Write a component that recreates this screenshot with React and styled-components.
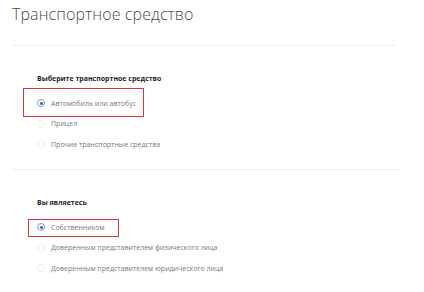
import React from 'react'
import styled, { createGlobalStyle } from 'styled-components'

const GlobalStyle = createGlobalStyle`
  html, body {
    margin: 0;
    padding: 0;
    background: #ffffff;
  }
  body {
    font-family: "Open Sans", "DejaVu Sans", sans-serif;
  }
`

const Page = styled.div`
  width: 424px;
  padding: 0 28px 0 12px;
  box-sizing: border-box;
`

const TitleBar = styled.div`
  height: 45px;
  border-bottom: 1px solid #eeeeee;
  width: 384px;
  box-sizing: content-box;
`

const Title = styled.h1`
  margin: 0;
  padding-top: 0;
  font-size: 16px;
  line-height: 29px;
  font-weight: 300;
  color: #4a4a4a;
  letter-spacing: 0.1px;
`

const Section = styled.section`
  padding: 26.5px 0 14.5px 25px;
  width: 363px;
  border-bottom: ${p => (p.$last ? 'none' : '1px solid #eeeeee')};
`

const Heading = styled.h2`
  margin: 0 0 8.5px;
  font-size: 7px;
  line-height: 12px;
  font-weight: 700;
  color: #1f1f1f;
`

const Options = styled.div`
  display: flex;
  flex-direction: column;
`

const Row = styled.label`
  position: relative;
  display: flex;
  align-items: center;
  gap: 6px;
  height: 20.5px;
  font-size: 7px;
  color: #7a7a7a;
`

const Radio = styled.span`
  width: 8px;
  height: 8px;
  border-radius: 50%;
  box-sizing: border-box;
  border: 1px solid ${p => (p.$checked ? '#7d9ccc' : '#ececec')};
  display: flex;
  align-items: center;
  justify-content: center;
  flex-shrink: 0;

  &::after {
    content: '';
    width: 3px;
    height: 3px;
    border-radius: 50%;
    background: ${p => (p.$checked ? '#3d62a6' : 'transparent')};
  }
`

const Mark = styled.span`
  position: absolute;
  left: ${p => p.$l}px;
  top: ${p => p.$t}px;
  width: ${p => p.$w}px;
  height: ${p => p.$h}px;
  border: 1.5px solid #d9333a;
  box-sizing: border-box;
  pointer-events: none;
`

const groups = [
  {
    title: 'Выберите транспортное средство',
    options: ['Автомобиль или автобус', 'Прицел', 'Прочие транспортные средства'],
    mark: { l: -14, t: -5.5, w: 121, h: 29 }
  },
  {
    title: 'Вы являетесь',
    options: [
      'Собственником',
      'Доверенным представителем физического лица',
      'Доверенным представителем юридического лица'
    ],
    mark: { l: -9, t: 1.5, w: 91, h: 18 },
    last: true
  }
]

export default function App() {
  return (
    <>
      <GlobalStyle />
      <Page>
        <TitleBar>
          <Title>Транспортное средство</Title>
        </TitleBar>
        {groups.map(g => (
          <Section key={g.title} $last={g.last}>
            <Heading>{g.title}</Heading>
            <Options>
              {g.options.map((o, i) => (
                <Row key={o}>
                  <Radio $checked={i === 0} />
                  {o}
                  {i === 0 && <Mark $l={g.mark.l} $t={g.mark.t} $w={g.mark.w} $h={g.mark.h} />}
                </Row>
              ))}
            </Options>
          </Section>
        ))}
      </Page>
    </>
  )
}
